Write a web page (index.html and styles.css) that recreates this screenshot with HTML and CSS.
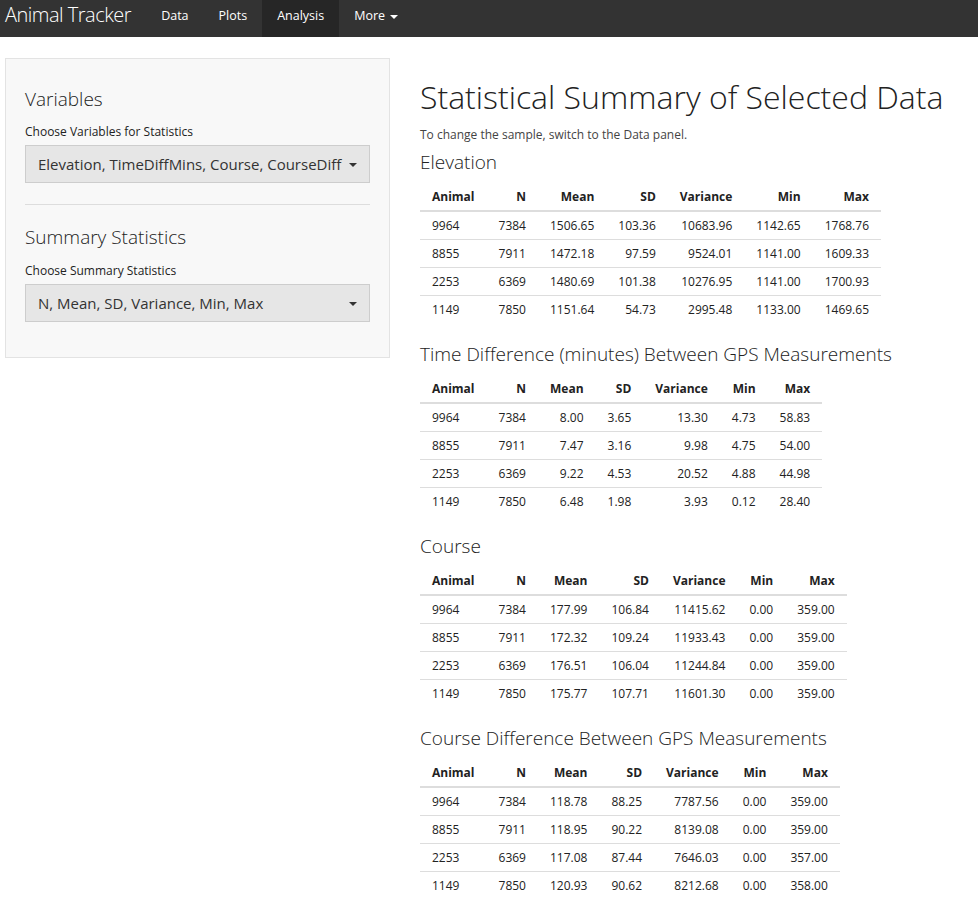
FILE: index.html
```html
<!DOCTYPE html>
<html>
<head>
<meta charset="utf-8">
<title>Animal Tracker</title>
<link rel="stylesheet" href="styles.css">
</head>
<body>
<nav class="navbar">
  <span class="brand">Animal Tracker</span>
  <ul class="nav">
    <li><a>Data</a></li>
    <li><a>Plots</a></li>
    <li class="active"><a>Analysis</a></li>
    <li><a>More <span class="caret caret-light"></span></a></li>
  </ul>
</nav>
<div class="page">
  <aside class="well">
    <h3 class="side-title first">Variables</h3>
    <label class="control-label">Choose Variables for Statistics</label>
    <div class="select">Elevation, TimeDiffMins, Course, CourseDiff<span class="caret"></span></div>
    <hr class="divider">
    <h3 class="side-title">Summary Statistics</h3>
    <label class="control-label">Choose Summary Statistics</label>
    <div class="select">N, Mean, SD, Variance, Min, Max<span class="caret"></span></div>
  </aside>
  <main class="main">
    <h1 class="title">Statistical Summary of Selected Data</h1>
    <p class="note">To change the sample, switch to the Data panel.</p>

    <section class="block">
      <h4 class="block-title">Elevation</h4>
      <table class="stats">
        <thead><tr><th class="left">Animal</th><th>N</th><th>Mean</th><th>SD</th><th>Variance</th><th>Min</th><th>Max</th></tr></thead>
        <tbody>
          <tr><td class="left">9964</td><td>7384</td><td>1506.65</td><td>103.36</td><td>10683.96</td><td>1142.65</td><td>1768.76</td></tr>
          <tr><td class="left">8855</td><td>7911</td><td>1472.18</td><td>97.59</td><td>9524.01</td><td>1141.00</td><td>1609.33</td></tr>
          <tr><td class="left">2253</td><td>6369</td><td>1480.69</td><td>101.38</td><td>10276.95</td><td>1141.00</td><td>1700.93</td></tr>
          <tr><td class="left">1149</td><td>7850</td><td>1151.64</td><td>54.73</td><td>2995.48</td><td>1133.00</td><td>1469.65</td></tr>
        </tbody>
      </table>
    </section>

    <section class="block">
      <h4 class="block-title">Time Difference (minutes) Between GPS Measurements</h4>
      <table class="stats">
        <thead><tr><th class="left">Animal</th><th>N</th><th>Mean</th><th>SD</th><th>Variance</th><th>Min</th><th>Max</th></tr></thead>
        <tbody>
          <tr><td class="left">9964</td><td>7384</td><td>8.00</td><td>3.65</td><td>13.30</td><td>4.73</td><td>58.83</td></tr>
          <tr><td class="left">8855</td><td>7911</td><td>7.47</td><td>3.16</td><td>9.98</td><td>4.75</td><td>54.00</td></tr>
          <tr><td class="left">2253</td><td>6369</td><td>9.22</td><td>4.53</td><td>20.52</td><td>4.88</td><td>44.98</td></tr>
          <tr><td class="left">1149</td><td>7850</td><td>6.48</td><td>1.98</td><td>3.93</td><td>0.12</td><td>28.40</td></tr>
        </tbody>
      </table>
    </section>

    <section class="block">
      <h4 class="block-title">Course</h4>
      <table class="stats">
        <thead><tr><th class="left">Animal</th><th>N</th><th>Mean</th><th>SD</th><th>Variance</th><th>Min</th><th>Max</th></tr></thead>
        <tbody>
          <tr><td class="left">9964</td><td>7384</td><td>177.99</td><td>106.84</td><td>11415.62</td><td>0.00</td><td>359.00</td></tr>
          <tr><td class="left">8855</td><td>7911</td><td>172.32</td><td>109.24</td><td>11933.43</td><td>0.00</td><td>359.00</td></tr>
          <tr><td class="left">2253</td><td>6369</td><td>176.51</td><td>106.04</td><td>11244.84</td><td>0.00</td><td>359.00</td></tr>
          <tr><td class="left">1149</td><td>7850</td><td>175.77</td><td>107.71</td><td>11601.30</td><td>0.00</td><td>359.00</td></tr>
        </tbody>
      </table>
    </section>

    <section class="block">
      <h4 class="block-title">Course Difference Between GPS Measurements</h4>
      <table class="stats">
        <thead><tr><th class="left">Animal</th><th>N</th><th>Mean</th><th>SD</th><th>Variance</th><th>Min</th><th>Max</th></tr></thead>
        <tbody>
          <tr><td class="left">9964</td><td>7384</td><td>118.78</td><td>88.25</td><td>7787.56</td><td>0.00</td><td>359.00</td></tr>
          <tr><td class="left">8855</td><td>7911</td><td>118.95</td><td>90.22</td><td>8139.08</td><td>0.00</td><td>359.00</td></tr>
          <tr><td class="left">2253</td><td>6369</td><td>117.08</td><td>87.44</td><td>7646.03</td><td>0.00</td><td>357.00</td></tr>
          <tr><td class="left">1149</td><td>7850</td><td>120.93</td><td>90.62</td><td>8212.68</td><td>0.00</td><td>358.00</td></tr>
        </tbody>
      </table>
    </section>
  </main>
</div>
</body>
</html>
```

FILE: styles.css
```css
* { box-sizing: border-box; }

html, body {
  margin: 0;
  padding: 0;
  background: #ffffff;
}

body {
  font-family: "Open Sans", "DejaVu Sans", sans-serif;
  font-size: 12px;
  line-height: 17px;
  color: #333333;
}

/* Navbar */
.navbar {
  display: flex;
  align-items: flex-start;
  height: 37px;
  background: #333333;
}

.brand {
  display: block;
  padding: 5px 15px 0 5px;
  font-size: 20px;
  line-height: 20px;
  font-weight: 300;
  letter-spacing: -0.5px;
  color: #ffffff;
}

.nav {
  display: flex;
  list-style: none;
  margin: 0;
  padding: 0;
}

.nav li a {
  display: block;
  height: 37px;
  padding: 7px 15px 13px;
  font-size: 12.5px;
  line-height: 17px;
  color: #ffffff;
}

.nav li.active a {
  background: #262626;
}

.caret {
  display: inline-block;
  width: 0;
  height: 0;
  border-top: 4px solid #333333;
  border-left: 4px solid transparent;
  border-right: 4px solid transparent;
  vertical-align: middle;
}

.caret-light {
  border-top-color: #ffffff;
  margin-left: 2px;
}

/* Page layout */
.page {
  display: flex;
  align-items: flex-start;
  gap: 30px;
  padding: 21px 5px 0;
}

.well {
  flex: 0 0 385px;
  width: 385px;
  background: #f8f8f8;
  border: 1px solid #e3e3e3;
  padding: 19px 19px 35px;
}

.side-title {
  margin: 21px 0 0;
  font-size: 19px;
  line-height: 21px;
  font-weight: 300;
  color: #222222;
}

.side-title.first {
  margin-top: 11px;
}

.control-label {
  display: block;
  margin-top: 13px;
  font-size: 12px;
  line-height: 17px;
  color: #222222;
}

.divider + .side-title + .control-label {
  margin-top: 14px;
}

.select {
  position: relative;
  margin-top: 5px;
  height: 38px;
  padding: 9px 12px;
  background: #e6e6e6;
  border: 1px solid #cdcdcd;
  font-size: 15px;
  line-height: 19px;
  color: #333333;
}

.select .caret {
  position: absolute;
  right: 12px;
  top: 17px;
}

.divider {
  margin: 21px 0 0;
  border: 0;
  border-top: 1px solid #dddddd;
  height: 0;
}

.divider + .side-title {
  margin-top: 22px;
}

/* Main */
.main {
  flex: 1 1 auto;
  min-width: 0;
}

.title {
  margin: 21px 0 0;
  font-size: 32px;
  line-height: 35px;
  font-weight: 300;
  color: #222222;
  white-space: nowrap;
}

.note {
  margin: 12px 0 0;
  font-size: 12px;
  line-height: 17px;
  color: #444444;
}

.block:first-of-type {
  margin-top: 9px;
}

.block-title {
  margin: 0 0 10px;
  font-size: 19px;
  line-height: 21px;
  font-weight: 300;
  color: #222222;
}

.stats {
  border-collapse: collapse;
  border-spacing: 0;
  margin-bottom: 21px;
  font-size: 12px;
  line-height: 17px;
  color: #222222;
}

.stats th,
.stats td {
  padding: 5px 12px;
  text-align: right;
  white-space: nowrap;
}

.stats th {
  font-weight: 700;
  border-bottom: 2px solid #dddddd;
}

.stats tbody tr + tr td {
  border-top: 1px solid #dddddd;
}

.stats .left {
  text-align: left;
}
```
